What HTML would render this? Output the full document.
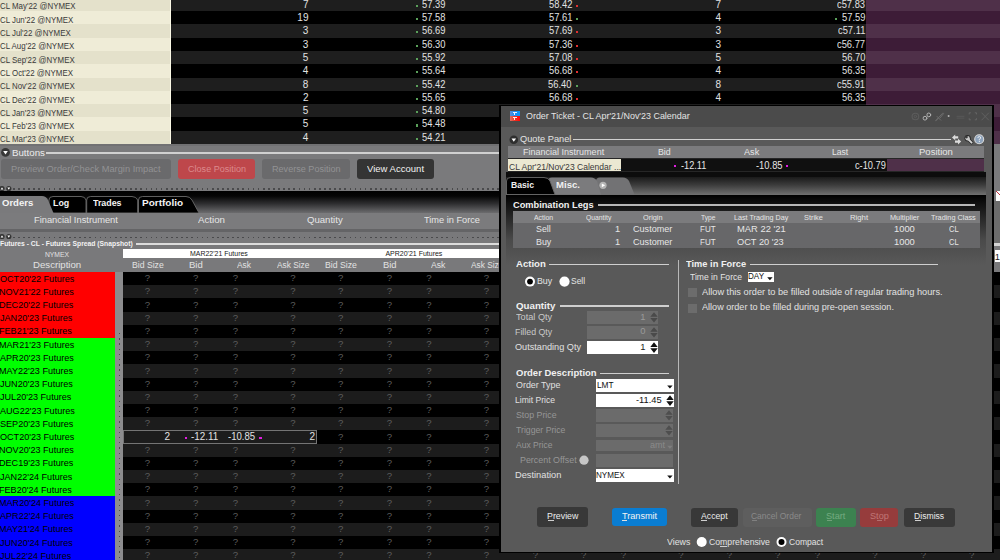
<!DOCTYPE html><html><head><meta charset="utf-8"><style>
*{margin:0;padding:0;box-sizing:border-box}
html,body{width:1000px;height:560px;overflow:hidden;background:#000;font-family:"Liberation Sans",sans-serif;}
.ab{position:absolute}
.t{position:absolute;white-space:nowrap;line-height:1}
</style></head><body>
<div class="ab" style="left:0px;top:-2.3000000000000114px;width:171.00px;height:14.30px;background:#e4e1cb;"></div>
<div class="ab" style="left:171px;top:-2.3000000000000114px;width:695.00px;height:14.30px;background:#1e1e1e;"></div>
<div class="ab" style="left:866px;top:-2.3000000000000114px;width:134.00px;height:14.30px;background:#4f3049;"></div>
<div class="ab" style="left:0px;top:11.0px;width:171.00px;height:14.30px;background:#efecd7;"></div>
<div class="ab" style="left:171px;top:11.0px;width:695.00px;height:14.30px;background:#000;"></div>
<div class="ab" style="left:866px;top:11.0px;width:134.00px;height:14.30px;background:#3d1c37;"></div>
<div class="ab" style="left:0px;top:24.299999999999997px;width:171.00px;height:14.30px;background:#e4e1cb;"></div>
<div class="ab" style="left:171px;top:24.299999999999997px;width:695.00px;height:14.30px;background:#1e1e1e;"></div>
<div class="ab" style="left:866px;top:24.299999999999997px;width:134.00px;height:14.30px;background:#4f3049;"></div>
<div class="ab" style="left:0px;top:37.599999999999994px;width:171.00px;height:14.30px;background:#efecd7;"></div>
<div class="ab" style="left:171px;top:37.599999999999994px;width:695.00px;height:14.30px;background:#000;"></div>
<div class="ab" style="left:866px;top:37.599999999999994px;width:134.00px;height:14.30px;background:#3d1c37;"></div>
<div class="ab" style="left:0px;top:50.89999999999999px;width:171.00px;height:14.30px;background:#e4e1cb;"></div>
<div class="ab" style="left:171px;top:50.89999999999999px;width:695.00px;height:14.30px;background:#1e1e1e;"></div>
<div class="ab" style="left:866px;top:50.89999999999999px;width:134.00px;height:14.30px;background:#4f3049;"></div>
<div class="ab" style="left:0px;top:64.19999999999999px;width:171.00px;height:14.30px;background:#efecd7;"></div>
<div class="ab" style="left:171px;top:64.19999999999999px;width:695.00px;height:14.30px;background:#000;"></div>
<div class="ab" style="left:866px;top:64.19999999999999px;width:134.00px;height:14.30px;background:#3d1c37;"></div>
<div class="ab" style="left:0px;top:77.5px;width:171.00px;height:14.30px;background:#e4e1cb;"></div>
<div class="ab" style="left:171px;top:77.5px;width:695.00px;height:14.30px;background:#1e1e1e;"></div>
<div class="ab" style="left:866px;top:77.5px;width:134.00px;height:14.30px;background:#4f3049;"></div>
<div class="ab" style="left:0px;top:90.8px;width:171.00px;height:14.30px;background:#efecd7;"></div>
<div class="ab" style="left:171px;top:90.8px;width:695.00px;height:14.30px;background:#000;"></div>
<div class="ab" style="left:866px;top:90.8px;width:134.00px;height:14.30px;background:#3d1c37;"></div>
<div class="ab" style="left:0px;top:104.1px;width:171.00px;height:14.30px;background:#e4e1cb;"></div>
<div class="ab" style="left:171px;top:104.1px;width:695.00px;height:14.30px;background:#1e1e1e;"></div>
<div class="ab" style="left:866px;top:104.1px;width:134.00px;height:14.30px;background:#4f3049;"></div>
<div class="ab" style="left:0px;top:117.4px;width:171.00px;height:14.30px;background:#efecd7;"></div>
<div class="ab" style="left:171px;top:117.4px;width:695.00px;height:14.30px;background:#000;"></div>
<div class="ab" style="left:866px;top:117.4px;width:134.00px;height:14.30px;background:#3d1c37;"></div>
<div class="ab" style="left:0px;top:130.7px;width:171.00px;height:14.30px;background:#e4e1cb;"></div>
<div class="ab" style="left:171px;top:130.7px;width:695.00px;height:14.30px;background:#1e1e1e;"></div>
<div class="ab" style="left:866px;top:130.7px;width:134.00px;height:14.30px;background:#4f3049;"></div>
<div class="t" style="left:-0.10px;top:1px;font-size:9.4px;color:#3a3a3a;transform:scaleX(0.8432);transform-origin:0 0;">CL May'22 @NYMEX</div>
<div class="t" style="left:302.95px;top:0px;font-size:10px;color:#e2e2e2;">7</div>
<div class="ab" style="left:415.5px;top:4.699999999999989px;width:2.20px;height:2.20px;background:#5aa05a;"></div>
<div class="t" style="left:422.23px;top:0px;font-size:10px;color:#e2e2e2;transform:scaleX(0.9339);transform-origin:0 0;">57.39</div>
<div class="t" style="left:548.62px;top:0px;font-size:10px;color:#e2e2e2;transform:scaleX(0.9339);transform-origin:0 0;">58.42</div>
<div class="ab" style="left:575.6px;top:4.699999999999989px;width:2.30px;height:2.20px;background:#e03030;"></div>
<div class="t" style="left:715.43px;top:0px;font-size:10px;color:#e2e2e2;">7</div>
<div class="t" style="left:836.96px;top:0px;font-size:10px;color:#e2e2e2;transform:scaleX(0.9339);transform-origin:0 0;">c57.83</div>
<div class="t" style="left:-0.10px;top:15px;font-size:9.4px;color:#3a3a3a;transform:scaleX(0.8432);transform-origin:0 0;">CL Jun'22 @NYMEX</div>
<div class="t" style="left:297.35px;top:13px;font-size:10px;color:#e2e2e2;">19</div>
<div class="ab" style="left:415.5px;top:18.0px;width:2.20px;height:2.20px;background:#5aa05a;"></div>
<div class="t" style="left:422.23px;top:13px;font-size:10px;color:#e2e2e2;transform:scaleX(0.9339);transform-origin:0 0;">57.58</div>
<div class="t" style="left:548.57px;top:13px;font-size:10px;color:#e2e2e2;transform:scaleX(0.9339);transform-origin:0 0;">57.61</div>
<div class="ab" style="left:575.6px;top:18.0px;width:2.30px;height:2.20px;background:#5aa05a;"></div>
<div class="t" style="left:715.48px;top:13px;font-size:10px;color:#e2e2e2;">4</div>
<div class="t" style="left:841.67px;top:13px;font-size:10px;color:#e2e2e2;transform:scaleX(0.9339);transform-origin:0 0;">57.59</div>
<div class="ab" style="left:835.2px;top:18.0px;width:2.20px;height:2.20px;background:#5aa05a;"></div>
<div class="t" style="left:-0.10px;top:28px;font-size:9.4px;color:#3a3a3a;transform:scaleX(0.8432);transform-origin:0 0;">CL Jul'22 @NYMEX</div>
<div class="t" style="left:302.85px;top:26px;font-size:10px;color:#e2e2e2;">3</div>
<div class="ab" style="left:415.5px;top:31.299999999999997px;width:2.20px;height:2.20px;background:#5aa05a;"></div>
<div class="t" style="left:422.23px;top:26px;font-size:10px;color:#e2e2e2;transform:scaleX(0.9339);transform-origin:0 0;">56.69</div>
<div class="t" style="left:548.57px;top:26px;font-size:10px;color:#e2e2e2;transform:scaleX(0.9339);transform-origin:0 0;">57.69</div>
<div class="ab" style="left:575.6px;top:31.299999999999997px;width:2.30px;height:2.20px;background:#e03030;"></div>
<div class="t" style="left:715.43px;top:26px;font-size:10px;color:#e2e2e2;">3</div>
<div class="t" style="left:837.70px;top:26px;font-size:10px;color:#e2e2e2;transform:scaleX(0.9339);transform-origin:0 0;">c57.11</div>
<div class="t" style="left:-0.10px;top:41px;font-size:9.4px;color:#3a3a3a;transform:scaleX(0.8432);transform-origin:0 0;">CL Aug'22 @NYMEX</div>
<div class="t" style="left:302.85px;top:40px;font-size:10px;color:#e2e2e2;">3</div>
<div class="ab" style="left:415.5px;top:44.599999999999994px;width:2.20px;height:2.20px;background:#5aa05a;"></div>
<div class="t" style="left:422.23px;top:40px;font-size:10px;color:#e2e2e2;transform:scaleX(0.9339);transform-origin:0 0;">56.30</div>
<div class="t" style="left:548.53px;top:40px;font-size:10px;color:#e2e2e2;transform:scaleX(0.9339);transform-origin:0 0;">57.36</div>
<div class="ab" style="left:575.6px;top:44.599999999999994px;width:2.30px;height:2.20px;background:#e03030;"></div>
<div class="t" style="left:715.43px;top:40px;font-size:10px;color:#e2e2e2;">3</div>
<div class="t" style="left:837.05px;top:40px;font-size:10px;color:#e2e2e2;transform:scaleX(0.9339);transform-origin:0 0;">c56.77</div>
<div class="t" style="left:-0.10px;top:55px;font-size:9.4px;color:#3a3a3a;transform:scaleX(0.8432);transform-origin:0 0;">CL Sep'22 @NYMEX</div>
<div class="t" style="left:302.85px;top:53px;font-size:10px;color:#e2e2e2;">5</div>
<div class="ab" style="left:415.5px;top:57.89999999999999px;width:2.20px;height:2.20px;background:#5aa05a;"></div>
<div class="t" style="left:422.23px;top:53px;font-size:10px;color:#e2e2e2;transform:scaleX(0.9339);transform-origin:0 0;">55.92</div>
<div class="t" style="left:548.53px;top:53px;font-size:10px;color:#e2e2e2;transform:scaleX(0.9339);transform-origin:0 0;">57.08</div>
<div class="ab" style="left:575.6px;top:57.89999999999999px;width:2.30px;height:2.20px;background:#e03030;"></div>
<div class="t" style="left:715.43px;top:53px;font-size:10px;color:#e2e2e2;">5</div>
<div class="t" style="left:841.58px;top:53px;font-size:10px;color:#e2e2e2;transform:scaleX(0.9339);transform-origin:0 0;">56.70</div>
<div class="t" style="left:-0.10px;top:68px;font-size:9.4px;color:#3a3a3a;transform:scaleX(0.8432);transform-origin:0 0;">CL Oct'22 @NYMEX</div>
<div class="t" style="left:302.75px;top:66px;font-size:10px;color:#e2e2e2;">4</div>
<div class="ab" style="left:415.5px;top:71.19999999999999px;width:2.20px;height:2.20px;background:#5aa05a;"></div>
<div class="t" style="left:422.23px;top:66px;font-size:10px;color:#e2e2e2;transform:scaleX(0.9339);transform-origin:0 0;">55.64</div>
<div class="t" style="left:548.53px;top:66px;font-size:10px;color:#e2e2e2;transform:scaleX(0.9339);transform-origin:0 0;">56.68</div>
<div class="ab" style="left:575.6px;top:71.19999999999999px;width:2.30px;height:2.20px;background:#e03030;"></div>
<div class="t" style="left:715.48px;top:66px;font-size:10px;color:#e2e2e2;">4</div>
<div class="t" style="left:841.63px;top:66px;font-size:10px;color:#e2e2e2;transform:scaleX(0.9339);transform-origin:0 0;">56.35</div>
<div class="t" style="left:-0.10px;top:81px;font-size:9.4px;color:#3a3a3a;transform:scaleX(0.8432);transform-origin:0 0;">CL Nov'22 @NYMEX</div>
<div class="t" style="left:302.85px;top:80px;font-size:10px;color:#e2e2e2;">8</div>
<div class="ab" style="left:415.5px;top:84.5px;width:2.20px;height:2.20px;background:#5aa05a;"></div>
<div class="t" style="left:422.23px;top:80px;font-size:10px;color:#e2e2e2;transform:scaleX(0.9339);transform-origin:0 0;">55.42</div>
<div class="t" style="left:548.48px;top:80px;font-size:10px;color:#e2e2e2;transform:scaleX(0.9339);transform-origin:0 0;">56.40</div>
<div class="ab" style="left:575.6px;top:84.5px;width:2.30px;height:2.20px;background:#5aa05a;"></div>
<div class="t" style="left:715.40px;top:80px;font-size:10px;color:#e2e2e2;">8</div>
<div class="t" style="left:837.00px;top:80px;font-size:10px;color:#e2e2e2;transform:scaleX(0.9339);transform-origin:0 0;">c55.91</div>
<div class="t" style="left:-0.10px;top:95px;font-size:9.4px;color:#3a3a3a;transform:scaleX(0.8432);transform-origin:0 0;">CL Dec'22 @NYMEX</div>
<div class="t" style="left:302.95px;top:93px;font-size:10px;color:#e2e2e2;">2</div>
<div class="ab" style="left:415.5px;top:97.8px;width:2.20px;height:2.20px;background:#5aa05a;"></div>
<div class="t" style="left:422.23px;top:93px;font-size:10px;color:#e2e2e2;transform:scaleX(0.9339);transform-origin:0 0;">55.65</div>
<div class="t" style="left:548.53px;top:93px;font-size:10px;color:#e2e2e2;transform:scaleX(0.9339);transform-origin:0 0;">56.68</div>
<div class="ab" style="left:575.6px;top:97.8px;width:2.30px;height:2.20px;background:#e03030;"></div>
<div class="t" style="left:715.48px;top:93px;font-size:10px;color:#e2e2e2;">4</div>
<div class="t" style="left:841.63px;top:93px;font-size:10px;color:#e2e2e2;transform:scaleX(0.9339);transform-origin:0 0;">56.35</div>
<div class="t" style="left:-0.10px;top:108px;font-size:9.4px;color:#3a3a3a;transform:scaleX(0.8432);transform-origin:0 0;">CL Jan'23 @NYMEX</div>
<div class="t" style="left:302.85px;top:106px;font-size:10px;color:#e2e2e2;">5</div>
<div class="ab" style="left:415.5px;top:111.1px;width:2.20px;height:2.20px;background:#5aa05a;"></div>
<div class="t" style="left:422.23px;top:106px;font-size:10px;color:#e2e2e2;transform:scaleX(0.9339);transform-origin:0 0;">54.80</div>
<div class="t" style="left:-0.10px;top:121px;font-size:9.4px;color:#3a3a3a;transform:scaleX(0.8432);transform-origin:0 0;">CL Feb'23 @NYMEX</div>
<div class="t" style="left:302.85px;top:119px;font-size:10px;color:#e2e2e2;">5</div>
<div class="ab" style="left:415.5px;top:124.4px;width:2.20px;height:2.20px;background:#5aa05a;"></div>
<div class="t" style="left:422.23px;top:119px;font-size:10px;color:#e2e2e2;transform:scaleX(0.9339);transform-origin:0 0;">54.48</div>
<div class="t" style="left:-0.10px;top:134px;font-size:9.4px;color:#3a3a3a;transform:scaleX(0.8432);transform-origin:0 0;">CL Mar'23 @NYMEX</div>
<div class="t" style="left:302.75px;top:133px;font-size:10px;color:#e2e2e2;">4</div>
<div class="ab" style="left:415.5px;top:137.7px;width:2.20px;height:2.20px;background:#5aa05a;"></div>
<div class="t" style="left:422.23px;top:133px;font-size:10px;color:#e2e2e2;transform:scaleX(0.9339);transform-origin:0 0;">54.21</div>
<div class="ab" style="left:170px;top:0px;width:1.00px;height:144.00px;background:#fbf9e6;"></div>
<div class="ab" style="left:0px;top:144px;width:1000.00px;height:47.00px;background:#7a7a7c;"></div>
<div class="ab" style="left:0px;top:144px;width:1000.00px;height:2.00px;background:#717173;"></div>
<svg class="ab" style="left:0;top:147px" width="11" height="11"><circle cx="5.5" cy="5.4" r="4.4" fill="#383838"/><polygon points="3.2,4 7.8,4 5.5,7.4" fill="#fff"/></svg>
<div class="t" style="left:12.12px;top:148px;font-size:9.6px;color:#ececec;transform:scaleX(1.0115);transform-origin:0 0;">Buttons</div>
<div class="ab" style="left:46.2px;top:152px;width:953.80px;height:1.80px;background:#d0d0d0;"></div>
<div class="ab" style="left:1px;top:159px;width:170.00px;height:20.00px;background:#6a6a6c;border-radius:3px"></div>
<div class="t" style="left:10.96px;top:164px;font-size:9.7px;color:#929294;transform:scaleX(0.9576);transform-origin:0 0;">Preview Order/Check Margin Impact</div>
<div class="ab" style="left:178.2px;top:159px;width:77.20px;height:20.00px;background:#be474b;border-radius:3px"></div>
<div class="t" style="left:187.85px;top:164px;font-size:9.7px;color:#dc8a8d;transform:scaleX(0.9365);transform-origin:0 0;">Close Position</div>
<div class="ab" style="left:262px;top:159px;width:88.00px;height:20.00px;background:#6a6a6c;border-radius:3px"></div>
<div class="t" style="left:271.87px;top:164px;font-size:9.7px;color:#929294;transform:scaleX(0.9371);transform-origin:0 0;">Reverse Position</div>
<div class="ab" style="left:357px;top:159px;width:77.00px;height:20.00px;background:#343434;border-radius:3px"></div>
<div class="t" style="left:367.25px;top:164px;font-size:9.7px;color:#f2f2f2;transform:scaleX(0.9835);transform-origin:0 0;">View Account</div>
<div class="ab" style="left:13px;top:188.2px;width:987px;height:1.6px;background-image:repeating-linear-gradient(90deg,#4a4a4c 0 1.6px,transparent 1.6px 5.1px)"></div>
<svg class="ab" style="left:0;top:184.7px" width="13" height="7"><circle cx="2" cy="3.5" r="2.6" fill="#333"/><polygon points="0.6,4.4 3.4,4.4 2,2.2" fill="#fff"/><circle cx="8.8" cy="3.5" r="2.6" fill="#333"/><polygon points="7.4,2.6 10.2,2.6 8.8,4.8" fill="#fff"/></svg>
<div class="ab" style="left:0px;top:191px;width:1000.00px;height:22.00px;background:linear-gradient(180deg,#000 0,#050505 5px,#303032 13px,#6c6c6e 22px);"></div>
<svg class="ab" style="left:0;top:195px" width="210" height="19"><path d="M138.5,18 L138.5,5 Q138.5,1.5 142.5,1.5 L186,1.5 Q190,1.5 192,5 L199,18 Z" fill="#000" stroke="#6a6a6a" stroke-width="0.9"/><path d="M86.7,18 L86.7,5 Q86.7,1.5 90.7,1.5 L132,1.5 Q136,1.5 137.7,5 L137.7,18 Z" fill="#000" stroke="#6a6a6a" stroke-width="0.9"/><path d="M49,18 L49,5 Q49,1.5 53,1.5 L81,1.5 Q85,1.5 86,5 L86,18 Z" fill="#000" stroke="#6a6a6a" stroke-width="0.9"/><path d="M0,1 L42,1 Q46,1 48,5 L53.5,18 L0,18 Z" fill="#7a7a7c"/></svg>
<div class="t" style="left:2.12px;top:199px;font-size:9px;color:#f4f4f4;font-weight:bold;transform:scaleX(1.0590);transform-origin:0 0;">Orders</div>
<div class="t" style="left:53.43px;top:199px;font-size:9px;color:#f4f4f4;font-weight:bold;transform:scaleX(0.9804);transform-origin:0 0;">Log</div>
<div class="t" style="left:92.61px;top:199px;font-size:9px;color:#f4f4f4;font-weight:bold;transform:scaleX(0.9834);transform-origin:0 0;">Trades</div>
<div class="t" style="left:142.35px;top:199px;font-size:9px;color:#f4f4f4;font-weight:bold;transform:scaleX(1.1097);transform-origin:0 0;">Portfolio</div>
<div class="ab" style="left:0px;top:213px;width:1000.00px;height:16.00px;background:#7b7b7d;"></div>
<div class="ab" style="left:0px;top:229px;width:1000.00px;height:3.00px;background:#646466;"></div>
<div class="t" style="left:33.65px;top:215px;font-size:9.6px;color:#e6e6e6;transform:scaleX(0.9710);transform-origin:0 0;">Financial Instrument</div>
<div class="t" style="left:197.60px;top:215px;font-size:9.6px;color:#e6e6e6;transform:scaleX(1.0129);transform-origin:0 0;">Action</div>
<div class="t" style="left:306.97px;top:215px;font-size:9.6px;color:#e6e6e6;">Quantity</div>
<div class="t" style="left:423.62px;top:215px;font-size:9.6px;color:#e6e6e6;transform:scaleX(0.9602);transform-origin:0 0;">Time in Force</div>
<div class="ab" style="left:0px;top:232px;width:1000.00px;height:328.00px;background:#79797b;"></div>
<div class="ab" style="left:13px;top:236.6px;width:987px;height:1.6px;background-image:repeating-linear-gradient(90deg,#4a4a4c 0 1.6px,transparent 1.6px 5.1px)"></div>
<svg class="ab" style="left:0;top:233.1px" width="13" height="7"><circle cx="2" cy="3.5" r="2.6" fill="#333"/><polygon points="0.6,4.4 3.4,4.4 2,2.2" fill="#fff"/><circle cx="8.8" cy="3.5" r="2.6" fill="#333"/><polygon points="7.4,2.6 10.2,2.6 8.8,4.8" fill="#fff"/></svg>
<div class="t" style="left:-0.44px;top:240px;font-size:7.3px;color:#f2f2f2;font-weight:bold;transform:scaleX(0.9282);transform-origin:0 0;">Futures - CL - Futures Spread (Snapshot)</div>
<div class="ab" style="left:135.8px;top:243.2px;width:362.90px;height:1.80px;background:#dcdcdc;"></div>
<div class="t" style="left:45.16px;top:251px;font-size:7.5px;color:#e2e2e2;transform:scaleX(0.8992);transform-origin:0 0;">NYMEX</div>
<div class="t" style="left:33.43px;top:260px;font-size:9.8px;color:#e2e2e2;transform:scaleX(0.9836);transform-origin:0 0;">Description</div>
<div class="ab" style="left:123px;top:249px;width:375.70px;height:9.20px;background:#fff;"></div>
<div class="t" style="left:190.44px;top:250px;font-size:7px;color:#1a1a1a;transform:scaleX(0.9942);transform-origin:0 0;">MAR22'21 Futures</div>
<div class="t" style="left:385.40px;top:250px;font-size:7px;color:#1a1a1a;">APR20'21 Futures</div>
<div class="ab" style="left:123px;top:258px;width:375.7px;height:14px;overflow:hidden">
<div class="t" style="left:8.71px;top:2px;font-size:9.6px;color:#e2e2e2;transform:scaleX(0.9004);transform-origin:0 0">Bid Size</div>
<div class="t" style="left:65.84px;top:2px;font-size:9.6px;color:#e2e2e2;transform:scaleX(0.9936);transform-origin:0 0">Bid</div>
<div class="t" style="left:114.00px;top:2px;font-size:9.6px;color:#e2e2e2;transform:scaleX(0.8759);transform-origin:0 0">Ask</div>
<div class="t" style="left:154.00px;top:2px;font-size:9.6px;color:#e2e2e2;transform:scaleX(0.8669);transform-origin:0 0">Ask Size</div>
<div class="t" style="left:202.30px;top:2px;font-size:9.6px;color:#e2e2e2;transform:scaleX(0.9063);transform-origin:0 0">Bid Size</div>
<div class="t" style="left:260.05px;top:2px;font-size:9.6px;color:#e2e2e2;transform:scaleX(0.9776);transform-origin:0 0">Bid</div>
<div class="t" style="left:308.00px;top:2px;font-size:9.6px;color:#e2e2e2;transform:scaleX(0.9009);transform-origin:0 0">Ask</div>
<div class="t" style="left:348.00px;top:2px;font-size:9.6px;color:#e2e2e2;transform:scaleX(0.8669);transform-origin:0 0">Ask Size</div>
</div>
<div class="ab" style="left:0px;top:272.0px;width:115.00px;height:14.20px;background:#ff0000;"></div>
<div class="ab" style="left:123px;top:272.0px;width:877.00px;height:14.20px;background:#000;"></div>
<div class="ab" style="left:0px;top:285.2px;width:115.00px;height:14.20px;background:#ff0000;"></div>
<div class="ab" style="left:123px;top:285.2px;width:877.00px;height:14.20px;background:#1c1c1c;"></div>
<div class="ab" style="left:0px;top:298.4px;width:115.00px;height:14.20px;background:#ff0000;"></div>
<div class="ab" style="left:123px;top:298.4px;width:877.00px;height:14.20px;background:#000;"></div>
<div class="ab" style="left:0px;top:311.6px;width:115.00px;height:14.20px;background:#ff0000;"></div>
<div class="ab" style="left:123px;top:311.6px;width:877.00px;height:14.20px;background:#1c1c1c;"></div>
<div class="ab" style="left:0px;top:324.8px;width:115.00px;height:14.20px;background:#ff0000;"></div>
<div class="ab" style="left:123px;top:324.8px;width:877.00px;height:14.20px;background:#000;"></div>
<div class="ab" style="left:0px;top:338.0px;width:115.00px;height:14.20px;background:#00ff00;"></div>
<div class="ab" style="left:123px;top:338.0px;width:877.00px;height:14.20px;background:#1c1c1c;"></div>
<div class="ab" style="left:0px;top:351.2px;width:115.00px;height:14.20px;background:#00ff00;"></div>
<div class="ab" style="left:123px;top:351.2px;width:877.00px;height:14.20px;background:#000;"></div>
<div class="ab" style="left:0px;top:364.4px;width:115.00px;height:14.20px;background:#00ff00;"></div>
<div class="ab" style="left:123px;top:364.4px;width:877.00px;height:14.20px;background:#1c1c1c;"></div>
<div class="ab" style="left:0px;top:377.6px;width:115.00px;height:14.20px;background:#00ff00;"></div>
<div class="ab" style="left:123px;top:377.6px;width:877.00px;height:14.20px;background:#000;"></div>
<div class="ab" style="left:0px;top:390.8px;width:115.00px;height:14.20px;background:#00ff00;"></div>
<div class="ab" style="left:123px;top:390.8px;width:877.00px;height:14.20px;background:#1c1c1c;"></div>
<div class="ab" style="left:0px;top:404.0px;width:115.00px;height:14.20px;background:#00ff00;"></div>
<div class="ab" style="left:123px;top:404.0px;width:877.00px;height:14.20px;background:#000;"></div>
<div class="ab" style="left:0px;top:417.2px;width:115.00px;height:14.20px;background:#00ff00;"></div>
<div class="ab" style="left:123px;top:417.2px;width:877.00px;height:14.20px;background:#1c1c1c;"></div>
<div class="ab" style="left:0px;top:430.4px;width:115.00px;height:14.20px;background:#00ff00;"></div>
<div class="ab" style="left:123px;top:430.4px;width:877.00px;height:14.20px;background:#000;"></div>
<div class="ab" style="left:0px;top:443.6px;width:115.00px;height:14.20px;background:#00ff00;"></div>
<div class="ab" style="left:123px;top:443.6px;width:877.00px;height:14.20px;background:#1c1c1c;"></div>
<div class="ab" style="left:0px;top:456.79999999999995px;width:115.00px;height:14.20px;background:#00ff00;"></div>
<div class="ab" style="left:123px;top:456.79999999999995px;width:877.00px;height:14.20px;background:#000;"></div>
<div class="ab" style="left:0px;top:470.0px;width:115.00px;height:14.20px;background:#00ff00;"></div>
<div class="ab" style="left:123px;top:470.0px;width:877.00px;height:14.20px;background:#1c1c1c;"></div>
<div class="ab" style="left:0px;top:483.2px;width:115.00px;height:14.20px;background:#00ff00;"></div>
<div class="ab" style="left:123px;top:483.2px;width:877.00px;height:14.20px;background:#000;"></div>
<div class="ab" style="left:0px;top:496.4px;width:115.00px;height:14.20px;background:#0000ff;"></div>
<div class="ab" style="left:123px;top:496.4px;width:877.00px;height:14.20px;background:#1c1c1c;"></div>
<div class="ab" style="left:0px;top:509.6px;width:115.00px;height:14.20px;background:#0000ff;"></div>
<div class="ab" style="left:123px;top:509.6px;width:877.00px;height:14.20px;background:#000;"></div>
<div class="ab" style="left:0px;top:522.8px;width:115.00px;height:14.20px;background:#0000ff;"></div>
<div class="ab" style="left:123px;top:522.8px;width:877.00px;height:14.20px;background:#1c1c1c;"></div>
<div class="ab" style="left:0px;top:536.0px;width:115.00px;height:14.20px;background:#0000ff;"></div>
<div class="ab" style="left:123px;top:536.0px;width:877.00px;height:14.20px;background:#000;"></div>
<div class="ab" style="left:0px;top:549.2px;width:115.00px;height:13.20px;background:#0000ff;"></div>
<div class="ab" style="left:123px;top:549.2px;width:877.00px;height:13.20px;background:#1c1c1c;"></div>
<div class="t" style="left:-0.21px;top:274px;font-size:9.5px;color:#000;transform:scaleX(0.9547);transform-origin:0 0;">OCT20'22 Futures</div>
<div class="t" style="left:144.71px;top:273px;font-size:9.6px;color:#5e5e5e;">?</div>
<div class="t" style="left:192.91px;top:273px;font-size:9.6px;color:#5e5e5e;">?</div>
<div class="t" style="left:232.71px;top:273px;font-size:9.6px;color:#5e5e5e;">?</div>
<div class="t" style="left:290.31px;top:273px;font-size:9.6px;color:#5e5e5e;">?</div>
<div class="t" style="left:338.11px;top:273px;font-size:9.6px;color:#5e5e5e;">?</div>
<div class="t" style="left:386.81px;top:273px;font-size:9.6px;color:#5e5e5e;">?</div>
<div class="t" style="left:426.31px;top:273px;font-size:9.6px;color:#5e5e5e;">?</div>
<div class="t" style="left:483.81px;top:273px;font-size:9.6px;color:#5e5e5e;">?</div>
<div class="t" style="left:-0.53px;top:287px;font-size:9.5px;color:#000;transform:scaleX(0.9547);transform-origin:0 0;">NOV21'22 Futures</div>
<div class="t" style="left:144.71px;top:286px;font-size:9.6px;color:#5e5e5e;">?</div>
<div class="t" style="left:192.91px;top:286px;font-size:9.6px;color:#5e5e5e;">?</div>
<div class="t" style="left:232.71px;top:286px;font-size:9.6px;color:#5e5e5e;">?</div>
<div class="t" style="left:290.31px;top:286px;font-size:9.6px;color:#5e5e5e;">?</div>
<div class="t" style="left:338.11px;top:286px;font-size:9.6px;color:#5e5e5e;">?</div>
<div class="t" style="left:386.81px;top:286px;font-size:9.6px;color:#5e5e5e;">?</div>
<div class="t" style="left:426.31px;top:286px;font-size:9.6px;color:#5e5e5e;">?</div>
<div class="t" style="left:483.81px;top:286px;font-size:9.6px;color:#5e5e5e;">?</div>
<div class="t" style="left:-0.53px;top:300px;font-size:9.5px;color:#000;transform:scaleX(0.9547);transform-origin:0 0;">DEC20'22 Futures</div>
<div class="t" style="left:144.71px;top:300px;font-size:9.6px;color:#5e5e5e;">?</div>
<div class="t" style="left:192.91px;top:300px;font-size:9.6px;color:#5e5e5e;">?</div>
<div class="t" style="left:232.71px;top:300px;font-size:9.6px;color:#5e5e5e;">?</div>
<div class="t" style="left:290.31px;top:300px;font-size:9.6px;color:#5e5e5e;">?</div>
<div class="t" style="left:338.11px;top:300px;font-size:9.6px;color:#5e5e5e;">?</div>
<div class="t" style="left:386.81px;top:300px;font-size:9.6px;color:#5e5e5e;">?</div>
<div class="t" style="left:426.31px;top:300px;font-size:9.6px;color:#5e5e5e;">?</div>
<div class="t" style="left:483.81px;top:300px;font-size:9.6px;color:#5e5e5e;">?</div>
<div class="t" style="left:0.06px;top:313px;font-size:9.5px;color:#000;transform:scaleX(0.9547);transform-origin:0 0;">JAN20'23 Futures</div>
<div class="t" style="left:144.71px;top:313px;font-size:9.6px;color:#5e5e5e;">?</div>
<div class="t" style="left:192.91px;top:313px;font-size:9.6px;color:#5e5e5e;">?</div>
<div class="t" style="left:232.71px;top:313px;font-size:9.6px;color:#5e5e5e;">?</div>
<div class="t" style="left:290.31px;top:313px;font-size:9.6px;color:#5e5e5e;">?</div>
<div class="t" style="left:338.11px;top:313px;font-size:9.6px;color:#5e5e5e;">?</div>
<div class="t" style="left:386.81px;top:313px;font-size:9.6px;color:#5e5e5e;">?</div>
<div class="t" style="left:426.31px;top:313px;font-size:9.6px;color:#5e5e5e;">?</div>
<div class="t" style="left:483.81px;top:313px;font-size:9.6px;color:#5e5e5e;">?</div>
<div class="t" style="left:-0.53px;top:326px;font-size:9.5px;color:#000;transform:scaleX(0.9547);transform-origin:0 0;">FEB21'23 Futures</div>
<div class="t" style="left:144.71px;top:326px;font-size:9.6px;color:#5e5e5e;">?</div>
<div class="t" style="left:192.91px;top:326px;font-size:9.6px;color:#5e5e5e;">?</div>
<div class="t" style="left:232.71px;top:326px;font-size:9.6px;color:#5e5e5e;">?</div>
<div class="t" style="left:290.31px;top:326px;font-size:9.6px;color:#5e5e5e;">?</div>
<div class="t" style="left:338.11px;top:326px;font-size:9.6px;color:#5e5e5e;">?</div>
<div class="t" style="left:386.81px;top:326px;font-size:9.6px;color:#5e5e5e;">?</div>
<div class="t" style="left:426.31px;top:326px;font-size:9.6px;color:#5e5e5e;">?</div>
<div class="t" style="left:483.81px;top:326px;font-size:9.6px;color:#5e5e5e;">?</div>
<div class="t" style="left:-0.53px;top:340px;font-size:9.5px;color:#000;transform:scaleX(0.9547);transform-origin:0 0;">MAR21'23 Futures</div>
<div class="t" style="left:144.71px;top:339px;font-size:9.6px;color:#5e5e5e;">?</div>
<div class="t" style="left:192.91px;top:339px;font-size:9.6px;color:#5e5e5e;">?</div>
<div class="t" style="left:232.71px;top:339px;font-size:9.6px;color:#5e5e5e;">?</div>
<div class="t" style="left:290.31px;top:339px;font-size:9.6px;color:#5e5e5e;">?</div>
<div class="t" style="left:338.11px;top:339px;font-size:9.6px;color:#5e5e5e;">?</div>
<div class="t" style="left:386.81px;top:339px;font-size:9.6px;color:#5e5e5e;">?</div>
<div class="t" style="left:426.31px;top:339px;font-size:9.6px;color:#5e5e5e;">?</div>
<div class="t" style="left:483.81px;top:339px;font-size:9.6px;color:#5e5e5e;">?</div>
<div class="t" style="left:0.20px;top:353px;font-size:9.5px;color:#000;transform:scaleX(0.9547);transform-origin:0 0;">APR20'23 Futures</div>
<div class="t" style="left:144.71px;top:352px;font-size:9.6px;color:#5e5e5e;">?</div>
<div class="t" style="left:192.91px;top:352px;font-size:9.6px;color:#5e5e5e;">?</div>
<div class="t" style="left:232.71px;top:352px;font-size:9.6px;color:#5e5e5e;">?</div>
<div class="t" style="left:290.31px;top:352px;font-size:9.6px;color:#5e5e5e;">?</div>
<div class="t" style="left:338.11px;top:352px;font-size:9.6px;color:#5e5e5e;">?</div>
<div class="t" style="left:386.81px;top:352px;font-size:9.6px;color:#5e5e5e;">?</div>
<div class="t" style="left:426.31px;top:352px;font-size:9.6px;color:#5e5e5e;">?</div>
<div class="t" style="left:483.81px;top:352px;font-size:9.6px;color:#5e5e5e;">?</div>
<div class="t" style="left:-0.53px;top:366px;font-size:9.5px;color:#000;transform:scaleX(0.9547);transform-origin:0 0;">MAY22'23 Futures</div>
<div class="t" style="left:144.71px;top:366px;font-size:9.6px;color:#5e5e5e;">?</div>
<div class="t" style="left:192.91px;top:366px;font-size:9.6px;color:#5e5e5e;">?</div>
<div class="t" style="left:232.71px;top:366px;font-size:9.6px;color:#5e5e5e;">?</div>
<div class="t" style="left:290.31px;top:366px;font-size:9.6px;color:#5e5e5e;">?</div>
<div class="t" style="left:338.11px;top:366px;font-size:9.6px;color:#5e5e5e;">?</div>
<div class="t" style="left:386.81px;top:366px;font-size:9.6px;color:#5e5e5e;">?</div>
<div class="t" style="left:426.31px;top:366px;font-size:9.6px;color:#5e5e5e;">?</div>
<div class="t" style="left:483.81px;top:366px;font-size:9.6px;color:#5e5e5e;">?</div>
<div class="t" style="left:0.06px;top:379px;font-size:9.5px;color:#000;transform:scaleX(0.9547);transform-origin:0 0;">JUN20'23 Futures</div>
<div class="t" style="left:144.71px;top:379px;font-size:9.6px;color:#5e5e5e;">?</div>
<div class="t" style="left:192.91px;top:379px;font-size:9.6px;color:#5e5e5e;">?</div>
<div class="t" style="left:232.71px;top:379px;font-size:9.6px;color:#5e5e5e;">?</div>
<div class="t" style="left:290.31px;top:379px;font-size:9.6px;color:#5e5e5e;">?</div>
<div class="t" style="left:338.11px;top:379px;font-size:9.6px;color:#5e5e5e;">?</div>
<div class="t" style="left:386.81px;top:379px;font-size:9.6px;color:#5e5e5e;">?</div>
<div class="t" style="left:426.31px;top:379px;font-size:9.6px;color:#5e5e5e;">?</div>
<div class="t" style="left:483.81px;top:379px;font-size:9.6px;color:#5e5e5e;">?</div>
<div class="t" style="left:0.06px;top:392px;font-size:9.5px;color:#000;transform:scaleX(0.9547);transform-origin:0 0;">JUL20'23 Futures</div>
<div class="t" style="left:144.71px;top:392px;font-size:9.6px;color:#5e5e5e;">?</div>
<div class="t" style="left:192.91px;top:392px;font-size:9.6px;color:#5e5e5e;">?</div>
<div class="t" style="left:232.71px;top:392px;font-size:9.6px;color:#5e5e5e;">?</div>
<div class="t" style="left:290.31px;top:392px;font-size:9.6px;color:#5e5e5e;">?</div>
<div class="t" style="left:338.11px;top:392px;font-size:9.6px;color:#5e5e5e;">?</div>
<div class="t" style="left:386.81px;top:392px;font-size:9.6px;color:#5e5e5e;">?</div>
<div class="t" style="left:426.31px;top:392px;font-size:9.6px;color:#5e5e5e;">?</div>
<div class="t" style="left:483.81px;top:392px;font-size:9.6px;color:#5e5e5e;">?</div>
<div class="t" style="left:0.20px;top:406px;font-size:9.5px;color:#000;transform:scaleX(0.9547);transform-origin:0 0;">AUG22'23 Futures</div>
<div class="t" style="left:144.71px;top:405px;font-size:9.6px;color:#5e5e5e;">?</div>
<div class="t" style="left:192.91px;top:405px;font-size:9.6px;color:#5e5e5e;">?</div>
<div class="t" style="left:232.71px;top:405px;font-size:9.6px;color:#5e5e5e;">?</div>
<div class="t" style="left:290.31px;top:405px;font-size:9.6px;color:#5e5e5e;">?</div>
<div class="t" style="left:338.11px;top:405px;font-size:9.6px;color:#5e5e5e;">?</div>
<div class="t" style="left:386.81px;top:405px;font-size:9.6px;color:#5e5e5e;">?</div>
<div class="t" style="left:426.31px;top:405px;font-size:9.6px;color:#5e5e5e;">?</div>
<div class="t" style="left:483.81px;top:405px;font-size:9.6px;color:#5e5e5e;">?</div>
<div class="t" style="left:-0.21px;top:419px;font-size:9.5px;color:#000;transform:scaleX(0.9547);transform-origin:0 0;">SEP20'23 Futures</div>
<div class="t" style="left:144.71px;top:418px;font-size:9.6px;color:#5e5e5e;">?</div>
<div class="t" style="left:192.91px;top:418px;font-size:9.6px;color:#5e5e5e;">?</div>
<div class="t" style="left:232.71px;top:418px;font-size:9.6px;color:#5e5e5e;">?</div>
<div class="t" style="left:290.31px;top:418px;font-size:9.6px;color:#5e5e5e;">?</div>
<div class="t" style="left:338.11px;top:418px;font-size:9.6px;color:#5e5e5e;">?</div>
<div class="t" style="left:386.81px;top:418px;font-size:9.6px;color:#5e5e5e;">?</div>
<div class="t" style="left:426.31px;top:418px;font-size:9.6px;color:#5e5e5e;">?</div>
<div class="t" style="left:483.81px;top:418px;font-size:9.6px;color:#5e5e5e;">?</div>
<div class="t" style="left:-0.21px;top:432px;font-size:9.5px;color:#000;transform:scaleX(0.9547);transform-origin:0 0;">OCT20'23 Futures</div>
<div class="t" style="left:-0.53px;top:445px;font-size:9.5px;color:#000;transform:scaleX(0.9547);transform-origin:0 0;">NOV20'23 Futures</div>
<div class="t" style="left:144.71px;top:445px;font-size:9.6px;color:#5e5e5e;">?</div>
<div class="t" style="left:192.91px;top:445px;font-size:9.6px;color:#5e5e5e;">?</div>
<div class="t" style="left:232.71px;top:445px;font-size:9.6px;color:#5e5e5e;">?</div>
<div class="t" style="left:290.31px;top:445px;font-size:9.6px;color:#5e5e5e;">?</div>
<div class="t" style="left:338.11px;top:445px;font-size:9.6px;color:#5e5e5e;">?</div>
<div class="t" style="left:386.81px;top:445px;font-size:9.6px;color:#5e5e5e;">?</div>
<div class="t" style="left:426.31px;top:445px;font-size:9.6px;color:#5e5e5e;">?</div>
<div class="t" style="left:483.81px;top:445px;font-size:9.6px;color:#5e5e5e;">?</div>
<div class="t" style="left:-0.53px;top:458px;font-size:9.5px;color:#000;transform:scaleX(0.9547);transform-origin:0 0;">DEC19'23 Futures</div>
<div class="t" style="left:144.71px;top:458px;font-size:9.6px;color:#5e5e5e;">?</div>
<div class="t" style="left:192.91px;top:458px;font-size:9.6px;color:#5e5e5e;">?</div>
<div class="t" style="left:232.71px;top:458px;font-size:9.6px;color:#5e5e5e;">?</div>
<div class="t" style="left:290.31px;top:458px;font-size:9.6px;color:#5e5e5e;">?</div>
<div class="t" style="left:338.11px;top:458px;font-size:9.6px;color:#5e5e5e;">?</div>
<div class="t" style="left:386.81px;top:458px;font-size:9.6px;color:#5e5e5e;">?</div>
<div class="t" style="left:426.31px;top:458px;font-size:9.6px;color:#5e5e5e;">?</div>
<div class="t" style="left:483.81px;top:458px;font-size:9.6px;color:#5e5e5e;">?</div>
<div class="t" style="left:0.06px;top:472px;font-size:9.5px;color:#000;transform:scaleX(0.9547);transform-origin:0 0;">JAN22'24 Futures</div>
<div class="t" style="left:144.71px;top:471px;font-size:9.6px;color:#5e5e5e;">?</div>
<div class="t" style="left:192.91px;top:471px;font-size:9.6px;color:#5e5e5e;">?</div>
<div class="t" style="left:232.71px;top:471px;font-size:9.6px;color:#5e5e5e;">?</div>
<div class="t" style="left:290.31px;top:471px;font-size:9.6px;color:#5e5e5e;">?</div>
<div class="t" style="left:338.11px;top:471px;font-size:9.6px;color:#5e5e5e;">?</div>
<div class="t" style="left:386.81px;top:471px;font-size:9.6px;color:#5e5e5e;">?</div>
<div class="t" style="left:426.31px;top:471px;font-size:9.6px;color:#5e5e5e;">?</div>
<div class="t" style="left:483.81px;top:471px;font-size:9.6px;color:#5e5e5e;">?</div>
<div class="t" style="left:-0.53px;top:485px;font-size:9.5px;color:#000;transform:scaleX(0.9547);transform-origin:0 0;">FEB20'24 Futures</div>
<div class="t" style="left:144.71px;top:484px;font-size:9.6px;color:#5e5e5e;">?</div>
<div class="t" style="left:192.91px;top:484px;font-size:9.6px;color:#5e5e5e;">?</div>
<div class="t" style="left:232.71px;top:484px;font-size:9.6px;color:#5e5e5e;">?</div>
<div class="t" style="left:290.31px;top:484px;font-size:9.6px;color:#5e5e5e;">?</div>
<div class="t" style="left:338.11px;top:484px;font-size:9.6px;color:#5e5e5e;">?</div>
<div class="t" style="left:386.81px;top:484px;font-size:9.6px;color:#5e5e5e;">?</div>
<div class="t" style="left:426.31px;top:484px;font-size:9.6px;color:#5e5e5e;">?</div>
<div class="t" style="left:483.81px;top:484px;font-size:9.6px;color:#5e5e5e;">?</div>
<div class="t" style="left:-0.53px;top:498px;font-size:9.5px;color:#000;transform:scaleX(0.9547);transform-origin:0 0;">MAR20'24 Futures</div>
<div class="t" style="left:144.71px;top:498px;font-size:9.6px;color:#5e5e5e;">?</div>
<div class="t" style="left:192.91px;top:498px;font-size:9.6px;color:#5e5e5e;">?</div>
<div class="t" style="left:232.71px;top:498px;font-size:9.6px;color:#5e5e5e;">?</div>
<div class="t" style="left:290.31px;top:498px;font-size:9.6px;color:#5e5e5e;">?</div>
<div class="t" style="left:338.11px;top:498px;font-size:9.6px;color:#5e5e5e;">?</div>
<div class="t" style="left:386.81px;top:498px;font-size:9.6px;color:#5e5e5e;">?</div>
<div class="t" style="left:426.31px;top:498px;font-size:9.6px;color:#5e5e5e;">?</div>
<div class="t" style="left:483.81px;top:498px;font-size:9.6px;color:#5e5e5e;">?</div>
<div class="t" style="left:0.20px;top:511px;font-size:9.5px;color:#000;transform:scaleX(0.9547);transform-origin:0 0;">APR22'24 Futures</div>
<div class="t" style="left:144.71px;top:511px;font-size:9.6px;color:#5e5e5e;">?</div>
<div class="t" style="left:192.91px;top:511px;font-size:9.6px;color:#5e5e5e;">?</div>
<div class="t" style="left:232.71px;top:511px;font-size:9.6px;color:#5e5e5e;">?</div>
<div class="t" style="left:290.31px;top:511px;font-size:9.6px;color:#5e5e5e;">?</div>
<div class="t" style="left:338.11px;top:511px;font-size:9.6px;color:#5e5e5e;">?</div>
<div class="t" style="left:386.81px;top:511px;font-size:9.6px;color:#5e5e5e;">?</div>
<div class="t" style="left:426.31px;top:511px;font-size:9.6px;color:#5e5e5e;">?</div>
<div class="t" style="left:483.81px;top:511px;font-size:9.6px;color:#5e5e5e;">?</div>
<div class="t" style="left:-0.53px;top:524px;font-size:9.5px;color:#000;transform:scaleX(0.9547);transform-origin:0 0;">MAY21'24 Futures</div>
<div class="t" style="left:144.71px;top:524px;font-size:9.6px;color:#5e5e5e;">?</div>
<div class="t" style="left:192.91px;top:524px;font-size:9.6px;color:#5e5e5e;">?</div>
<div class="t" style="left:232.71px;top:524px;font-size:9.6px;color:#5e5e5e;">?</div>
<div class="t" style="left:290.31px;top:524px;font-size:9.6px;color:#5e5e5e;">?</div>
<div class="t" style="left:338.11px;top:524px;font-size:9.6px;color:#5e5e5e;">?</div>
<div class="t" style="left:386.81px;top:524px;font-size:9.6px;color:#5e5e5e;">?</div>
<div class="t" style="left:426.31px;top:524px;font-size:9.6px;color:#5e5e5e;">?</div>
<div class="t" style="left:483.81px;top:524px;font-size:9.6px;color:#5e5e5e;">?</div>
<div class="t" style="left:0.06px;top:538px;font-size:9.5px;color:#000;transform:scaleX(0.9547);transform-origin:0 0;">JUN20'24 Futures</div>
<div class="t" style="left:144.71px;top:537px;font-size:9.6px;color:#5e5e5e;">?</div>
<div class="t" style="left:192.91px;top:537px;font-size:9.6px;color:#5e5e5e;">?</div>
<div class="t" style="left:232.71px;top:537px;font-size:9.6px;color:#5e5e5e;">?</div>
<div class="t" style="left:290.31px;top:537px;font-size:9.6px;color:#5e5e5e;">?</div>
<div class="t" style="left:338.11px;top:537px;font-size:9.6px;color:#5e5e5e;">?</div>
<div class="t" style="left:386.81px;top:537px;font-size:9.6px;color:#5e5e5e;">?</div>
<div class="t" style="left:426.31px;top:537px;font-size:9.6px;color:#5e5e5e;">?</div>
<div class="t" style="left:483.81px;top:537px;font-size:9.6px;color:#5e5e5e;">?</div>
<div class="t" style="left:0.06px;top:551px;font-size:9.5px;color:#000;transform:scaleX(0.9547);transform-origin:0 0;">JUL22'24 Futures</div>
<div class="t" style="left:144.71px;top:550px;font-size:9.6px;color:#5e5e5e;">?</div>
<div class="t" style="left:192.91px;top:550px;font-size:9.6px;color:#5e5e5e;">?</div>
<div class="t" style="left:232.71px;top:550px;font-size:9.6px;color:#5e5e5e;">?</div>
<div class="t" style="left:290.31px;top:550px;font-size:9.6px;color:#5e5e5e;">?</div>
<div class="t" style="left:338.11px;top:550px;font-size:9.6px;color:#5e5e5e;">?</div>
<div class="t" style="left:386.81px;top:550px;font-size:9.6px;color:#5e5e5e;">?</div>
<div class="t" style="left:426.31px;top:550px;font-size:9.6px;color:#5e5e5e;">?</div>
<div class="t" style="left:483.81px;top:550px;font-size:9.6px;color:#5e5e5e;">?</div>
<div class="t" style="left:532.71px;top:537px;font-size:9.6px;color:#5e5e5e;">?</div>
<div class="t" style="left:580.91px;top:537px;font-size:9.6px;color:#5e5e5e;">?</div>
<div class="t" style="left:620.71px;top:537px;font-size:9.6px;color:#5e5e5e;">?</div>
<div class="t" style="left:678.31px;top:537px;font-size:9.6px;color:#5e5e5e;">?</div>
<div class="t" style="left:726.71px;top:537px;font-size:9.6px;color:#5e5e5e;">?</div>
<div class="t" style="left:774.91px;top:537px;font-size:9.6px;color:#5e5e5e;">?</div>
<div class="t" style="left:814.71px;top:537px;font-size:9.6px;color:#5e5e5e;">?</div>
<div class="t" style="left:872.31px;top:537px;font-size:9.6px;color:#5e5e5e;">?</div>
<div class="t" style="left:920.71px;top:537px;font-size:9.6px;color:#5e5e5e;">?</div>
<div class="t" style="left:968.91px;top:537px;font-size:9.6px;color:#5e5e5e;">?</div>
<div class="t" style="left:532.71px;top:550px;font-size:9.6px;color:#5e5e5e;">?</div>
<div class="t" style="left:580.91px;top:550px;font-size:9.6px;color:#5e5e5e;">?</div>
<div class="t" style="left:620.71px;top:550px;font-size:9.6px;color:#5e5e5e;">?</div>
<div class="t" style="left:678.31px;top:550px;font-size:9.6px;color:#5e5e5e;">?</div>
<div class="t" style="left:726.71px;top:550px;font-size:9.6px;color:#5e5e5e;">?</div>
<div class="t" style="left:774.91px;top:550px;font-size:9.6px;color:#5e5e5e;">?</div>
<div class="t" style="left:814.71px;top:550px;font-size:9.6px;color:#5e5e5e;">?</div>
<div class="t" style="left:872.31px;top:550px;font-size:9.6px;color:#5e5e5e;">?</div>
<div class="t" style="left:920.71px;top:550px;font-size:9.6px;color:#5e5e5e;">?</div>
<div class="t" style="left:968.91px;top:550px;font-size:9.6px;color:#5e5e5e;">?</div>
<div class="ab" style="left:993.5px;top:191px;width:6.50px;height:81.00px;background:#79797b;"></div>
<div class="ab" style="left:996px;top:190px;width:4.00px;height:11.00px;background:#fff;"></div>
<svg class="ab" style="left:996px;top:190px" width="4" height="11"><path d="M0,1 L4,5" stroke="#c03040" stroke-width="1"/></svg>
<div class="ab" style="left:993.5px;top:201px;width:6.50px;height:42.00px;background:#6c6c6c;"></div>
<div class="ab" style="left:993.5px;top:243px;width:6.50px;height:3.00px;background:#d4d4d4;"></div>
<div class="ab" style="left:995px;top:250px;width:5.00px;height:12.00px;background:#fff;"></div>
<div class="t" style="left:994.79px;top:252px;font-size:9.4px;color:#222;">1</div>
<div class="ab" style="left:115px;top:272px;width:8.00px;height:288.00px;background:#8c8c8e;"></div>
<div class="ab" style="left:118.5px;top:333px;width:1.3px;height:227px;background-image:repeating-linear-gradient(180deg,#4c4c4c 0 1.3px,transparent 1.3px 5.2px)"></div>
<div class="ab" style="left:123px;top:430.2px;width:194.10px;height:13.60px;background:#1c1c1c;border:1px solid #747474"></div>
<div class="t" style="left:164.55px;top:432px;font-size:10px;color:#e2e2e2;">2</div>
<div class="ab" style="left:184.6px;top:436.8px;width:2.50px;height:2.50px;background:#e01ee0;"></div>
<div class="t" style="left:191.26px;top:432px;font-size:10px;color:#e2e2e2;transform:scaleX(0.9850);transform-origin:0 0;">-12.11</div>
<div class="t" style="left:227.97px;top:432px;font-size:10px;color:#e2e2e2;transform:scaleX(0.9564);transform-origin:0 0;">-10.85</div>
<div class="ab" style="left:259.1px;top:436.8px;width:2.50px;height:2.50px;background:#e01ee0;"></div>
<div class="t" style="left:309.55px;top:432px;font-size:10px;color:#e2e2e2;">2</div>
<div class="t" style="left:338.11px;top:432px;font-size:9.6px;color:#5e5e5e;">?</div>
<div class="t" style="left:386.81px;top:432px;font-size:9.6px;color:#5e5e5e;">?</div>
<div class="t" style="left:426.31px;top:432px;font-size:9.6px;color:#5e5e5e;">?</div>
<div class="t" style="left:483.81px;top:432px;font-size:9.6px;color:#5e5e5e;">?</div>
<div class="ab" style="left:993px;top:144px;width:7.00px;height:47.00px;background:#7a7a7c;"></div>
<div class="ab" style="left:499px;top:104.8px;width:494.50px;height:448.70px;background:#000;"></div>
<div class="ab" style="left:500.5px;top:106.2px;width:491.30px;height:445.80px;background:#595959;"></div>
<div class="ab" style="left:500.5px;top:106.2px;width:491.30px;height:20.40px;background:#4b4b4b;"></div>
<div class="ab" style="left:509.9px;top:111.1px;width:10.10px;height:4.70px;background:linear-gradient(90deg,#5a8fd8,#1a8ef0 50%,#0898f8);"></div>
<div class="ab" style="left:512.6px;top:112.2px;width:4.40px;height:1.00px;background:#e8f0ff;"></div>
<div class="ab" style="left:514.3px;top:113.2px;width:1.00px;height:1.80px;background:#e8f0ff;"></div>
<div class="ab" style="left:509.9px;top:116.3px;width:10.10px;height:4.60px;background:linear-gradient(90deg,#e07060,#f03020 50%,#ff0505);"></div>
<div class="ab" style="left:512.6px;top:117.4px;width:4.40px;height:1.00px;background:#ffe8e8;"></div>
<div class="ab" style="left:514.3px;top:118.4px;width:1.00px;height:1.80px;background:#ffe8e8;"></div>
<div class="t" style="left:526.40px;top:111px;font-size:9.6px;color:#e4e4e4;transform:scaleX(0.9295);transform-origin:0 0;">Order Ticket - CL Apr'21/Nov'23 Calendar</div>
<svg class="ab" style="left:905px;top:106px" width="88" height="20" fill="none" stroke-linecap="round"><circle cx="10.4" cy="10.5" r="3.3" stroke="#5c5c5c" stroke-width="1.1"/><circle cx="10.4" cy="10.5" r="1.2" stroke="#5c5c5c" stroke-width="0.9"/><circle cx="20" cy="12.2" r="1.9" stroke="#bababa" stroke-width="0.9"/><circle cx="23.8" cy="8.9" r="1.9" stroke="#bababa" stroke-width="0.9"/><path d="M30.8,14.6 L33.4,12" stroke="#6c6c6c" stroke-width="1.1"/><path d="M32,10.4 L35.8,14.2 M33.4,11.8 L37.4,7.4 Q38.4,6.6 38.6,7.6 L35,12" stroke="#6c6c6c" stroke-width="1"/><circle cx="43.6" cy="10.1" r="1" fill="#b4b4b4" stroke="none"/><path d="M52,10.3 L59,10.3 M52,12.1 L59,12.1" stroke="#5e5e5e" stroke-width="0.7"/><path d="M65.5,6.8 L64.2,6.8 L64.2,8 M64.2,12.6 L64.2,13.8 L65.5,13.8 M70.2,6.8 L71.5,6.8 L71.5,8 M71.5,12.6 L71.5,13.8 L70.2,13.8" stroke="#646464" stroke-width="1"/><path d="M76.8,7 L83.6,14 M83.6,7 L76.8,14" stroke="#626262" stroke-width="0.9"/></svg>
<svg class="ab" style="left:509px;top:134.5px" width="10" height="10"><circle cx="4.8" cy="4.8" r="4.3" fill="#2e2e2e"/><polygon points="2.5,3.6 7.1,3.6 4.8,6.8" fill="#fff"/></svg>
<div class="t" style="left:519.58px;top:134px;font-size:9.6px;color:#e4e4e4;transform:scaleX(0.9633);transform-origin:0 0;">Quote Panel</div>
<div class="ab" style="left:573px;top:139px;width:378.00px;height:1.20px;background:#d0d0d0;"></div>
<svg class="ab" style="left:948px;top:130px" width="40" height="18"><path d="M4,7.4 L7.2,4.6 L7.2,6.2 L10.2,6.2 L10.2,8.6 L7.2,8.6 L7.2,10.2 Z" fill="#dcdcdc"/><path d="M13.2,11.6 L10,8.8 L10,10.4 L7,10.4 L7,12.8 L10,12.8 L10,14.4 Z" fill="#dcdcdc"/><path d="M20,9 L23.6,12.6" stroke="#262626" stroke-width="3.4" stroke-linecap="round"/><circle cx="19.6" cy="8.2" r="3.1" fill="#262626"/><path d="M20,9 L23.6,12.6" stroke="#d4d4d4" stroke-width="2" stroke-linecap="round"/><circle cx="19.6" cy="8.2" r="2.2" fill="#c8c8c8"/><circle cx="18.5" cy="7.1" r="1.3" fill="#3a3a3a"/><circle cx="31.2" cy="9.2" r="4.5" fill="#8ea3bc" stroke="#d8d8d8" stroke-width="1.1"/><path d="M29.8,8 Q30,6.5 31.3,6.5 Q32.8,6.6 32.6,8 Q32.3,9 31.3,9.4 L31.3,10.3" stroke="#f4f4f4" stroke-width="0.9" fill="none"/><circle cx="31.3" cy="11.6" r="0.5" fill="#fff"/></svg>
<div class="ab" style="left:508.4px;top:146px;width:475.60px;height:12.20px;background:#7b7b7d;"></div>
<div class="t" style="left:523.28px;top:147px;font-size:9.6px;color:#e6e6e6;transform:scaleX(0.9394);transform-origin:0 0;">Financial Instrument</div>
<div class="t" style="left:658.30px;top:147px;font-size:9.6px;color:#e6e6e6;transform:scaleX(0.9135);transform-origin:0 0;">Bid</div>
<div class="t" style="left:743.50px;top:147px;font-size:9.6px;color:#e6e6e6;transform:scaleX(0.9541);transform-origin:0 0;">Ask</div>
<div class="t" style="left:831.81px;top:147px;font-size:9.6px;color:#e6e6e6;transform:scaleX(0.8970);transform-origin:0 0;">Last</div>
<div class="t" style="left:918.74px;top:147px;font-size:9.6px;color:#e6e6e6;transform:scaleX(0.9928);transform-origin:0 0;">Position</div>
<div class="ab" style="left:508.4px;top:158.2px;width:475.60px;height:13.80px;background:#262626;"></div>
<div class="ab" style="left:508.4px;top:159px;width:112.60px;height:12.20px;background:#ebe8d2;"></div>
<div class="t" style="left:508.57px;top:163px;font-size:8.6px;color:#3a3a3a;transform:scaleX(0.9940);transform-origin:0 0;">CL Apr'21/Nov'23 Calendar ...</div>
<div class="ab" style="left:621px;top:159px;width:266.00px;height:12.20px;background:#101010;"></div>
<div class="ab" style="left:887px;top:159px;width:96.70px;height:12.20px;background:#4f3049;"></div>
<div class="ab" style="left:674px;top:165px;width:2.40px;height:2.40px;background:#e01ee0;"></div>
<div class="t" style="left:680.59px;top:161px;font-size:10px;color:#e6e6e6;transform:scaleX(0.9176);transform-origin:0 0;">-12.11</div>
<div class="t" style="left:755.58px;top:161px;font-size:10px;color:#e6e6e6;transform:scaleX(0.9364);transform-origin:0 0;">-10.85</div>
<div class="ab" style="left:785.5px;top:165px;width:2.40px;height:2.40px;background:#e01ee0;"></div>
<div class="t" style="left:854.63px;top:161px;font-size:10px;color:#e6e6e6;transform:scaleX(0.9231);transform-origin:0 0;">c-10.79</div>
<div class="ab" style="left:506px;top:172px;width:479.50px;height:5.00px;background:#0c0c0c;"></div>
<div class="ab" style="left:506px;top:177px;width:479.50px;height:17.50px;background:linear-gradient(180deg,#1a1a1a 0,#3c3c3c 8px,#6e6e6e 17.5px);"></div>
<svg class="ab" style="left:505px;top:176px" width="140" height="19"><path d="M91,18.5 L91,5 Q91,1.5 95,1.5 L118,1.5 Q122,1.5 124,5 L129.5,18.5 Z" fill="#727274"/><path d="M43,5 Q43,1.5 47,1.5 L86,1.5 Q90,1.5 92,5 L96,18.5 L50,18.5 Z" fill="#7b7b7d"/><path d="M1.5,18.5 L1.5,5 Q1.5,1.5 5.5,1.5 L39,1.5 Q43,1.5 45,5 L50,18.5 Z" fill="#000" stroke="#6a6a6a" stroke-width="0.9"/><circle cx="98" cy="9.3" r="3.6" fill="#b4b4b4"/><polygon points="96.8,7.4 96.8,11.2 100.2,9.3" fill="#fff"/></svg>
<div class="t" style="left:511.44px;top:181px;font-size:9.2px;color:#f0f0f0;font-weight:bold;transform:scaleX(0.9389);transform-origin:0 0;">Basic</div>
<div class="t" style="left:555.68px;top:181px;font-size:9.2px;color:#f0f0f0;font-weight:bold;transform:scaleX(1.0411);transform-origin:0 0;">Misc.</div>
<div class="ab" style="left:506px;top:194.5px;width:479.50px;height:70.50px;background:linear-gradient(180deg,#000 0,#0a0a0a 5px,#262626 22px,#4a4a4a 45px,#595959 70px);"></div>
<div class="t" style="left:512.63px;top:200px;font-size:9.4px;color:#f2f2f2;font-weight:bold;transform:scaleX(0.9850);transform-origin:0 0;">Combination Legs</div>
<div class="ab" style="left:598px;top:204.2px;width:376.80px;height:1.60px;background:#b8b8b8;"></div>
<div class="ab" style="left:513px;top:211px;width:466.60px;height:12.00px;background:#7b7b7d;"></div>
<div class="ab" style="left:513px;top:223px;width:466.60px;height:25.00px;background:#676769;"></div>
<div class="t" style="left:534.00px;top:215px;font-size:6.6px;color:#e6e6e6;transform:scaleX(1.0436);transform-origin:0 0;">Action</div>
<div class="t" style="left:585.69px;top:215px;font-size:6.6px;color:#e6e6e6;transform:scaleX(1.0293);transform-origin:0 0;">Quantity</div>
<div class="t" style="left:643.42px;top:215px;font-size:6.6px;color:#e6e6e6;transform:scaleX(1.1119);transform-origin:0 0;">Origin</div>
<div class="t" style="left:700.87px;top:215px;font-size:6.6px;color:#e6e6e6;transform:scaleX(1.0101);transform-origin:0 0;">Type</div>
<div class="t" style="left:734.42px;top:215px;font-size:6.6px;color:#e6e6e6;transform:scaleX(1.0898);transform-origin:0 0;">Last Trading Day</div>
<div class="t" style="left:804.07px;top:215px;font-size:6.6px;color:#e6e6e6;transform:scaleX(1.1187);transform-origin:0 0;">Strike</div>
<div class="t" style="left:849.78px;top:215px;font-size:6.6px;color:#e6e6e6;transform:scaleX(1.1743);transform-origin:0 0;">Right</div>
<div class="t" style="left:890.01px;top:215px;font-size:6.6px;color:#e6e6e6;transform:scaleX(1.1097);transform-origin:0 0;">Multiplier</div>
<div class="t" style="left:931.25px;top:215px;font-size:6.6px;color:#e6e6e6;transform:scaleX(1.1074);transform-origin:0 0;">Trading Class</div>
<div class="t" style="left:536.23px;top:225px;font-size:9.3px;color:#e6e6e6;transform:scaleX(0.9500);transform-origin:0 0;">Sell</div>
<div class="t" style="left:615.06px;top:225px;font-size:9.3px;color:#e6e6e6;">1</div>
<div class="t" style="left:633.30px;top:225px;font-size:9.3px;color:#e6e6e6;transform:scaleX(0.9769);transform-origin:0 0;">Customer</div>
<div class="t" style="left:700.11px;top:225px;font-size:9.3px;color:#e6e6e6;transform:scaleX(0.8596);transform-origin:0 0;">FUT</div>
<div class="t" style="left:736.75px;top:225px;font-size:9.3px;color:#e6e6e6;transform:scaleX(1.0084);transform-origin:0 0;">MAR 22 '21</div>
<div class="t" style="left:894.30px;top:225px;font-size:9.3px;color:#e6e6e6;transform:scaleX(1.0066);transform-origin:0 0;">1000</div>
<div class="t" style="left:948.62px;top:225px;font-size:9.3px;color:#e6e6e6;transform:scaleX(0.8098);transform-origin:0 0;">CL</div>
<div class="t" style="left:535.53px;top:238px;font-size:9.3px;color:#e6e6e6;transform:scaleX(0.9500);transform-origin:0 0;">Buy</div>
<div class="t" style="left:615.06px;top:238px;font-size:9.3px;color:#e6e6e6;">1</div>
<div class="t" style="left:633.30px;top:238px;font-size:9.3px;color:#e6e6e6;transform:scaleX(0.9769);transform-origin:0 0;">Customer</div>
<div class="t" style="left:700.11px;top:238px;font-size:9.3px;color:#e6e6e6;transform:scaleX(0.8596);transform-origin:0 0;">FUT</div>
<div class="t" style="left:737.08px;top:238px;font-size:9.3px;color:#e6e6e6;transform:scaleX(0.9932);transform-origin:0 0;">OCT 20 '23</div>
<div class="t" style="left:894.30px;top:238px;font-size:9.3px;color:#e6e6e6;transform:scaleX(1.0066);transform-origin:0 0;">1000</div>
<div class="t" style="left:948.62px;top:238px;font-size:9.3px;color:#e6e6e6;transform:scaleX(0.8098);transform-origin:0 0;">CL</div>
<div class="t" style="left:515.56px;top:260px;font-size:9.2px;color:#f0f0f0;font-weight:bold;transform:scaleX(1.0420);transform-origin:0 0;">Action</div>
<div class="ab" style="left:549px;top:264px;width:119.70px;height:1.30px;background:#cfcfcf;"></div>
<div class="t" style="left:685.91px;top:260px;font-size:9.2px;color:#f0f0f0;font-weight:bold;transform:scaleX(1.0101);transform-origin:0 0;">Time in Force</div>
<div class="ab" style="left:750.2px;top:263.8px;width:187.80px;height:1.30px;background:#cfcfcf;"></div>
<div class="ab" style="left:677.8px;top:259.6px;width:1.00px;height:224.40px;background:#b8b8b8;"></div>
<svg class="ab" style="left:520px;top:272px" width="60" height="20"><circle cx="10" cy="9.6" r="5" fill="#fff"/><circle cx="10" cy="9.6" r="2.9" fill="#000"/><circle cx="44.5" cy="9.6" r="5.1" fill="#fff"/></svg>
<div class="t" style="left:536.79px;top:276px;font-size:9.4px;color:#e4e4e4;transform:scaleX(0.9377);transform-origin:0 0;">Buy</div>
<div class="t" style="left:571.42px;top:276px;font-size:9.4px;color:#e4e4e4;transform:scaleX(0.9031);transform-origin:0 0;">Sell</div>
<div class="t" style="left:515.51px;top:302px;font-size:9.2px;color:#f0f0f0;font-weight:bold;transform:scaleX(1.0571);transform-origin:0 0;">Quantity</div>
<div class="ab" style="left:560.2px;top:305.4px;width:108.50px;height:1.30px;background:#cfcfcf;"></div>
<div class="t" style="left:515.72px;top:312px;font-size:9.4px;color:#c8c8c8;transform:scaleX(0.9785);transform-origin:0 0;">Total Qty</div>
<div class="ab" style="left:587px;top:311.1px;width:71.20px;height:12.80px;background:#6b6b6b;"></div>
<svg class="ab" style="left:649.7px;top:311.1px" width="8" height="12.799999999999955"><path d="M0.3,5.799999999999978 L4,1.2 L7.7,5.799999999999978 Z M0.3,6.999999999999977 L4,11.599999999999955 L7.7,6.999999999999977 Z" fill="#4a4a4a"/></svg>
<div class="t" style="left:640.31px;top:312px;font-size:9.4px;color:#9a9a9a;">1</div>
<div class="t" style="left:515.19px;top:327px;font-size:9.4px;color:#c8c8c8;transform:scaleX(0.9394);transform-origin:0 0;">Filled Qty</div>
<div class="ab" style="left:587px;top:326.2px;width:71.20px;height:12.60px;background:#6b6b6b;"></div>
<svg class="ab" style="left:649.7px;top:326.2px" width="8" height="12.600000000000023"><path d="M0.3,5.700000000000012 L4,1.2 L7.7,5.700000000000012 Z M0.3,6.900000000000011 L4,11.400000000000023 L7.7,6.900000000000011 Z" fill="#4a4a4a"/></svg>
<div class="t" style="left:640.21px;top:326px;font-size:9.4px;color:#9a9a9a;">0</div>
<div class="t" style="left:515.49px;top:342px;font-size:9.4px;color:#e0e0e0;transform:scaleX(0.9749);transform-origin:0 0;">Outstanding Qty</div>
<div class="ab" style="left:587px;top:340.9px;width:71.20px;height:13.30px;background:#fff;"></div>
<svg class="ab" style="left:649.7px;top:340.9px" width="8" height="13.300000000000011"><path d="M0.3,6.050000000000006 L4,1.2 L7.7,6.050000000000006 Z M0.3,7.250000000000005 L4,12.100000000000012 L7.7,7.250000000000005 Z" fill="#111"/></svg>
<div class="t" style="left:640.31px;top:342px;font-size:9.4px;color:#222;">1</div>
<div class="t" style="left:515.52px;top:369px;font-size:9.2px;color:#f0f0f0;font-weight:bold;transform:scaleX(1.0326);transform-origin:0 0;">Order Description</div>
<div class="ab" style="left:600.4px;top:372.8px;width:68.30px;height:1.30px;background:#cfcfcf;"></div>
<div class="t" style="left:515.50px;top:380px;font-size:9.4px;color:#e0e0e0;transform:scaleX(0.9497);transform-origin:0 0;">Order Type</div>
<div class="ab" style="left:596.4px;top:379.4px;width:77.60px;height:12.70px;background:#fff;"></div>
<svg class="ab" style="left:667px;top:379.4px" width="6" height="12.700000000000045"><path d="M0.2,6.550000000000023 L5.6,6.550000000000023 L2.9,9.550000000000022 Z" fill="#111"/></svg>
<div class="t" style="left:597.13px;top:380px;font-size:9.4px;color:#111;transform:scaleX(0.8847);transform-origin:0 0;">LMT</div>
<div class="t" style="left:515.21px;top:395px;font-size:9.4px;color:#e0e0e0;transform:scaleX(0.9162);transform-origin:0 0;">Limit Price</div>
<div class="ab" style="left:596.4px;top:393.9px;width:77.60px;height:13.10px;background:#fff;"></div>
<svg class="ab" style="left:665.5px;top:393.9px" width="8" height="13.100000000000023"><path d="M0.3,5.950000000000012 L4,1.2 L7.7,5.950000000000012 Z M0.3,7.150000000000011 L4,11.900000000000023 L7.7,7.150000000000011 Z" fill="#111"/></svg>
<div class="t" style="left:636.28px;top:395px;font-size:9.4px;color:#111;transform:scaleX(0.9942);transform-origin:0 0;">-11.45</div>
<div class="t" style="left:515.50px;top:410px;font-size:9.4px;color:#969696;transform:scaleX(0.9391);transform-origin:0 0;">Stop Price</div>
<div class="ab" style="left:596.4px;top:409.4px;width:77.10px;height:12.80px;background:#6b6b6b;"></div>
<svg class="ab" style="left:665.0px;top:409.4px" width="8" height="12.800000000000011"><path d="M0.3,5.800000000000006 L4,1.2 L7.7,5.800000000000006 Z M0.3,7.000000000000005 L4,11.600000000000012 L7.7,7.000000000000005 Z" fill="#4e4e4e"/></svg>
<div class="t" style="left:515.73px;top:425px;font-size:9.4px;color:#969696;transform:scaleX(0.9275);transform-origin:0 0;">Trigger Price</div>
<div class="ab" style="left:596.4px;top:424.3px;width:77.10px;height:12.70px;background:#6b6b6b;"></div>
<svg class="ab" style="left:665.0px;top:424.3px" width="8" height="12.699999999999989"><path d="M0.3,5.749999999999995 L4,1.2 L7.7,5.749999999999995 Z M0.3,6.949999999999994 L4,11.49999999999999 L7.7,6.949999999999994 Z" fill="#4e4e4e"/></svg>
<div class="t" style="left:515.90px;top:440px;font-size:9.4px;color:#969696;transform:scaleX(0.9068);transform-origin:0 0;">Aux Price</div>
<div class="ab" style="left:596.4px;top:439.7px;width:77.10px;height:11.20px;background:#6b6b6b;"></div>
<svg class="ab" style="left:666.5px;top:439.7px" width="6" height="11.199999999999989"><path d="M0.2,5.7999999999999945 L5.6,5.7999999999999945 L2.9,8.799999999999994 Z" fill="#7e7e7e"/></svg>
<div class="t" style="left:649.64px;top:440px;font-size:9.4px;color:#8a8a8a;transform:scaleX(0.9653);transform-origin:0 0;">amt</div>
<div class="t" style="left:520.09px;top:455px;font-size:9.4px;color:#969696;transform:scaleX(0.9479);transform-origin:0 0;">Percent Offset</div>
<svg class="ab" style="left:578px;top:454px" width="12" height="12"><circle cx="6" cy="6.2" r="4.6" fill="#c6c6c6"/></svg>
<div class="ab" style="left:596.4px;top:454.4px;width:77.10px;height:12.20px;background:#6b6b6b;"></div>
<div class="t" style="left:515.16px;top:470px;font-size:9.4px;color:#e0e0e0;transform:scaleX(0.9882);transform-origin:0 0;">Destination</div>
<div class="ab" style="left:596.4px;top:468.9px;width:77.60px;height:12.80px;background:#fff;"></div>
<svg class="ab" style="left:667px;top:468.9px" width="6" height="12.800000000000011"><path d="M0.2,6.600000000000006 L5.6,6.600000000000006 L2.9,9.600000000000005 Z" fill="#111"/></svg>
<div class="t" style="left:596.35px;top:470px;font-size:9.4px;color:#111;transform:scaleX(0.8621);transform-origin:0 0;">NYMEX</div>
<div class="t" style="left:690.03px;top:272px;font-size:9.4px;color:#e4e4e4;transform:scaleX(0.9134);transform-origin:0 0;">Time in Force</div>
<div class="ab" style="left:747.8px;top:271.8px;width:26.20px;height:10.20px;background:#fff;"></div>
<svg class="ab" style="left:767px;top:271.8px" width="6" height="10.199999999999989"><path d="M0.2,5.2999999999999945 L5.6,5.2999999999999945 L2.9,8.299999999999994 Z" fill="#111"/></svg>
<div class="t" style="left:748.05px;top:271px;font-size:9.4px;color:#111;transform:scaleX(0.8658);transform-origin:0 0;">DAY</div>
<div class="ab" style="left:688.2px;top:288px;width:9.20px;height:9.00px;background:#6c6c6c;"></div>
<div class="t" style="left:702.20px;top:287px;font-size:9.4px;color:#e2e2e2;transform:scaleX(0.9844);transform-origin:0 0;">Allow this order to be filled outside of regular trading hours.</div>
<div class="ab" style="left:688.2px;top:304px;width:9.20px;height:8.60px;background:#6c6c6c;"></div>
<div class="t" style="left:702.20px;top:302px;font-size:9.4px;color:#e2e2e2;transform:scaleX(0.9692);transform-origin:0 0;">Allow order to be filled during pre-open session.</div>
<div class="ab" style="left:537.2px;top:507.2px;width:51.30px;height:19.50px;background:#383838;border-radius:3px"></div>
<div class="t" style="left:547.29px;top:511px;font-size:9.6px;color:#ececec;transform:scaleX(0.9189);transform-origin:0 0;">Preview</div>
<div class="ab" style="left:548px;top:520.2px;width:5.50px;height:0.80px;background:#cfcfcf;"></div>
<div class="ab" style="left:612.2px;top:507.5px;width:55.00px;height:18.70px;background:#0a7dd2;border-radius:3px"></div>
<div class="t" style="left:622.02px;top:511px;font-size:9.6px;color:#f4f4f4;transform:scaleX(0.9504);transform-origin:0 0;">Transmit</div>
<div class="ab" style="left:622px;top:520.2px;width:5.00px;height:0.80px;background:#e0e0e0;"></div>
<div class="ab" style="left:691px;top:507.5px;width:46.80px;height:19.00px;background:#383838;border-radius:3px"></div>
<div class="t" style="left:701.20px;top:511px;font-size:9.6px;color:#ececec;transform:scaleX(0.9051);transform-origin:0 0;">Accept</div>
<div class="ab" style="left:701px;top:520.2px;width:6.00px;height:0.80px;background:#cfcfcf;"></div>
<div class="ab" style="left:742.7px;top:507.5px;width:69.00px;height:19.00px;background:#5e5e5e;border-radius:3px"></div>
<div class="t" style="left:751.28px;top:511px;font-size:9.6px;color:#8a8a8a;transform:scaleX(0.8840);transform-origin:0 0;">Cancel Order</div>
<div class="ab" style="left:752px;top:520.2px;width:5.00px;height:0.80px;background:#808080;"></div>
<div class="ab" style="left:816.3px;top:507.5px;width:39.90px;height:19.00px;background:#3c8250;border-radius:3px"></div>
<div class="t" style="left:826.39px;top:511px;font-size:9.6px;color:#74ab80;transform:scaleX(0.9557);transform-origin:0 0;">Start</div>
<div class="ab" style="left:827px;top:520.2px;width:5.00px;height:0.80px;background:#70a07a;"></div>
<div class="ab" style="left:859.5px;top:507.5px;width:38.70px;height:19.00px;background:#963c3c;border-radius:3px"></div>
<div class="t" style="left:869.59px;top:511px;font-size:9.6px;color:#c07676;transform:scaleX(0.9518);transform-origin:0 0;">Stop</div>
<div class="ab" style="left:877px;top:520.2px;width:5.00px;height:0.80px;background:#b07070;"></div>
<div class="ab" style="left:903.7px;top:507.5px;width:51.00px;height:19.00px;background:#393939;border-radius:3px"></div>
<div class="t" style="left:914.31px;top:511px;font-size:9.6px;color:#ececec;transform:scaleX(0.8986);transform-origin:0 0;">Dismiss</div>
<div class="ab" style="left:915px;top:520.2px;width:6.00px;height:0.80px;background:#cfcfcf;"></div>
<div class="t" style="left:666.96px;top:537px;font-size:9.4px;color:#e2e2e2;transform:scaleX(0.9375);transform-origin:0 0;">Views</div>
<svg class="ab" style="left:690px;top:530px" width="100" height="24"><circle cx="11.7" cy="12" r="5" fill="#fff"/><circle cx="91.5" cy="12" r="5" fill="#fff"/><circle cx="91.5" cy="12" r="3" fill="#000"/></svg>
<div class="t" style="left:708.56px;top:537px;font-size:9.4px;color:#e2e2e2;transform:scaleX(0.9283);transform-origin:0 0;">Comprehensive</div>
<div class="ab" style="left:719.5px;top:546px;width:7.50px;height:0.80px;background:#d0d0d0;"></div>
<div class="t" style="left:788.77px;top:537px;font-size:9.4px;color:#e2e2e2;transform:scaleX(0.9088);transform-origin:0 0;">Compact</div>
</body></html>
